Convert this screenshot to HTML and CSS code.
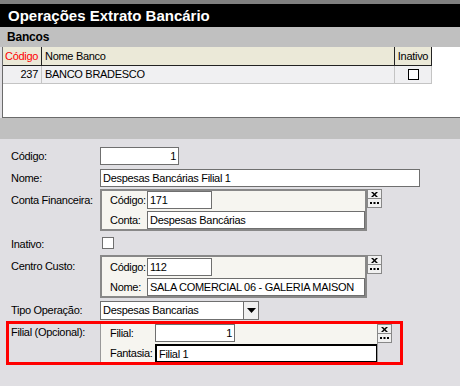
FILE: index.html
```html
<!DOCTYPE html>
<html lang="pt-BR">
<head>
  <meta charset="UTF-8" />
  <title>Operações Extrato Bancário</title>
  <link rel="stylesheet" href="styles.css">
</head>
<body>

  <div class="topstrip"></div>
  <header class="titlebar">Operações Extrato Bancário</header>
  <div class="sectionbar">Bancos</div>

  <div class="gridbox">
    <div class="grid-head">
      <div class="col-cod head-cod">Código</div>
      <div class="col-nome">Nome Banco</div>
      <div class="col-inat">Inativo</div>
    </div>
    <div class="grid-row">
      <div class="col-cod num">237</div>
      <div class="col-nome">BANCO BRADESCO</div>
      <div class="col-inat"><span class="gridcheck"></span></div>
    </div>
  </div>

  <div class="splitter"></div>

  <div class="form">
    <div class="row r-cod">
      <div class="lbl">Código:</div>
      <div class="input in-cod num">1</div>
    </div>

    <div class="row r-nome">
      <div class="lbl">Nome:</div>
      <div class="input in-nome">Despesas Bancárias Filial 1</div>
    </div>

    <div class="row r-conta">
      <div class="lbl lbl-top">Conta Financeira:</div>
      <div class="panel">
        <div class="prow">
          <div class="plbl">Código:</div>
          <div class="input in-small">171</div>
        </div>
        <div class="prow">
          <div class="plbl">Conta:</div>
          <div class="input in-wide">Despesas Bancárias</div>
        </div>
      </div>
      <div class="btns">
        <div class="sbtn"><svg width="7" height="5" viewBox="0 0 7 5"><path d="M0 0h2l1.5 1.5L5 0h2L4.5 2.5 7 5H5L3.5 3.5 2 5H0l2.5-2.5z" fill="#000"/></svg></div>
        <div class="sbtn"><svg width="9" height="2" viewBox="0 0 9 2"><path d="M0 0h2v2H0zM3.5 0h2v2h-2zM7 0h2v2H7z" fill="#000"/></svg></div>
      </div>
    </div>

    <div class="row r-inat">
      <div class="lbl lbl-inat">Inativo:</div>
      <span class="check"></span>
    </div>

    <div class="row r-cc">
      <div class="lbl lbl-top">Centro Custo:</div>
      <div class="panel panel-cc">
        <div class="prow">
          <div class="plbl">Código:</div>
          <div class="input in-small">112</div>
        </div>
        <div class="prow">
          <div class="plbl">Nome:</div>
          <div class="input in-wide">SALA COMERCIAL 06 - GALERIA MAISON</div>
        </div>
      </div>
      <div class="btns">
        <div class="sbtn"><svg width="7" height="5" viewBox="0 0 7 5"><path d="M0 0h2l1.5 1.5L5 0h2L4.5 2.5 7 5H5L3.5 3.5 2 5H0l2.5-2.5z" fill="#000"/></svg></div>
        <div class="sbtn"><svg width="9" height="2" viewBox="0 0 9 2"><path d="M0 0h2v2H0zM3.5 0h2v2h-2zM7 0h2v2H7z" fill="#000"/></svg></div>
      </div>
    </div>

    <div class="row r-tipo">
      <div class="lbl">Tipo Operação:</div>
      <div class="select">
        <div class="select-text">Despesas Bancarias</div>
        <div class="select-arrow"><svg width="9" height="5" viewBox="0 0 9 5"><path d="M0 0h9L4.5 5z" fill="#000"/></svg></div>
      </div>
    </div>

    <div class="row r-filial">
      <div class="lbl lbl-filial">Filial (Opcional):</div>
      <div class="panel-filial">
        <div class="prow">
          <div class="plbl plbl-f">Filial:</div>
          <div class="input in-filial num">1</div>
        </div>
        <div class="prow">
          <div class="plbl plbl-f">Fantasia:</div>
          <div class="input in-fantasia">Filial 1</div>
        </div>
      </div>
      <div class="btns btns-filial">
        <div class="sbtn"><svg width="7" height="5" viewBox="0 0 7 5"><path d="M0 0h2l1.5 1.5L5 0h2L4.5 2.5 7 5H5L3.5 3.5 2 5H0l2.5-2.5z" fill="#000"/></svg></div>
        <div class="sbtn"><svg width="9" height="2" viewBox="0 0 9 2"><path d="M0 0h2v2H0zM3.5 0h2v2h-2zM7 0h2v2H7z" fill="#000"/></svg></div>
      </div>
    </div>
  </div>

</body>
</html>
```

FILE: styles.css
```css
* {
  box-sizing: border-box;
}

body {
  margin: 0;
  width: 460px;
  height: 386px;
  overflow: hidden;
  background: #e0dfe3;
  font-family: 'Liberation Sans', Arial, sans-serif;
  font-size: 11px;
  letter-spacing: -0.3px;
  color: #000;
}

.topstrip {
  height: 4px;
  background: #808080;
}

.titlebar {
  height: 23px;
  line-height: 23px;
  padding-left: 8px;
  background: #000;
  color: #fff;
  font-weight: bold;
  font-size: 15px;
  letter-spacing: 0;
}

.sectionbar {
  height: 20px;
  line-height: 20px;
  padding-left: 7px;
  background: #c0c0c0;
  font-weight: bold;
  font-size: 12px;
  letter-spacing: -0.2px;
}

/* grade de bancos */
.gridbox {
  height: 71px;
  margin-left: 2px;
  background: #fff;
  border-left: 1px solid #6b6b6b;
  border-bottom: 1px solid #6b6b6b;
}

.grid-head,
.grid-row {
  display: flex;
  width: 429px;
}

.grid-head {
  height: 19px;
  line-height: 18px;
  background: #ebe9d8;
  border-bottom: 1px solid #222;
}

.grid-row {
  height: 18px;
  line-height: 17px;
  background: #f0f0f2;
  border-bottom: 1px solid #c4c4c4;
}

.col-cod {
  width: 38px;
  padding: 0 3px 0 2px;
}

.col-nome {
  width: 353px;
  padding-left: 3px;
  border-left: 1px solid #222;
}

.col-inat {
  width: 38px;
  text-align: center;
  border-left: 1px solid #222;
  border-right: 1px solid #222;
}

.grid-row .col-nome,
.grid-row .col-inat {
  border-color: #c4c4c4;
}

.head-cod {
  color: #f00;
}

.num {
  text-align: right;
}

.gridcheck {
  display: inline-block;
  width: 11px;
  height: 11px;
  margin-top: 3px;
  vertical-align: top;
  border: 1px solid #000;
  background: #fff;
}

.splitter {
  height: 21px;
  background: #c0c0c0;
}

/* formulario */
.form {
  padding-top: 8px;
}

.row {
  display: flex;
  align-items: flex-start;
}

.lbl {
  width: 100px;
  padding-left: 11px;
  line-height: 18px;
  white-space: nowrap;
}

.lbl-top {
  padding-top: 2px;
}

.input {
  height: 18px;
  line-height: 16px;
  padding: 0 2px;
  background: #fff;
  border: 1px solid #6f6f6f;
  white-space: nowrap;
  overflow: hidden;
}

.in-cod {
  width: 79px;
}

.r-nome {
  margin-top: 4px;
}

.in-nome {
  width: 320px;
}

.r-conta {
  margin-top: 2px;
}

.panel {
  width: 267px;
  height: 42px;
  padding: 0 0 0 6px;
  background: #f6f5f0;
  border: 2px solid #888;
  display: flex;
  flex-direction: column;
  gap: 2px;
}

.panel-cc {
  height: 43px;
  padding-top: 1px;
}

.prow {
  display: flex;
  align-items: center;
}

.plbl {
  width: 39px;
  padding-left: 2px;
  white-space: nowrap;
}

.in-small {
  width: 65px;
}

.in-wide {
  width: 218px;
}

.btns {
  display: flex;
  flex-direction: column;
}

.sbtn {
  width: 15px;
  height: 10px;
  display: flex;
  align-items: center;
  justify-content: center;
  background: #f0f0f0;
  border: 1px solid #888;
}

.sbtn + .sbtn {
  margin-top: -1px;
}

.r-inat {
  margin-top: 6px;
}

.lbl-inat {
  line-height: 14px;
}

.check {
  width: 12px;
  height: 12px;
  margin-left: 2px;
  background: #fff;
  border: 1px solid #6f6f6f;
}

.r-cc {
  margin-top: 4px;
}

.r-tipo {
  margin-top: 3px;
}

.select {
  display: flex;
  width: 159px;
  height: 19px;
}

.select-text {
  flex: 1;
  line-height: 17px;
  padding-left: 2px;
  background: #fff;
  border: 1px solid #6f6f6f;
}

.select-arrow {
  width: 16px;
  margin-left: -1px;
  display: flex;
  align-items: center;
  justify-content: center;
  background: #f0f0f0;
  border: 1px solid #6f6f6f;
}

/* destaque vermelho */
.r-filial {
  margin-top: 1px;
  margin-left: 6px;
  width: 397px;
  height: 44px;
  border: 3px solid #f00;
}

.lbl-filial {
  width: 91px;
  padding-left: 2px;
  line-height: 16px;
}

.panel-filial {
  width: 278px;
  height: 38px;
  padding-left: 9px;
  background: #f6f5f0;
  border-left: 1px solid #999;
  border-right: 1px solid #999;
  display: flex;
  flex-direction: column;
  gap: 2px;
}

.plbl-f {
  width: 45px;
  padding-left: 0;
}

.in-filial {
  width: 80px;
}

.in-fantasia {
  width: 222px;
  border: 1px solid #000;
  border-top-width: 2px;
  border-left-width: 2px;
}

.btns-filial {
  margin-left: -1px;
}
```
